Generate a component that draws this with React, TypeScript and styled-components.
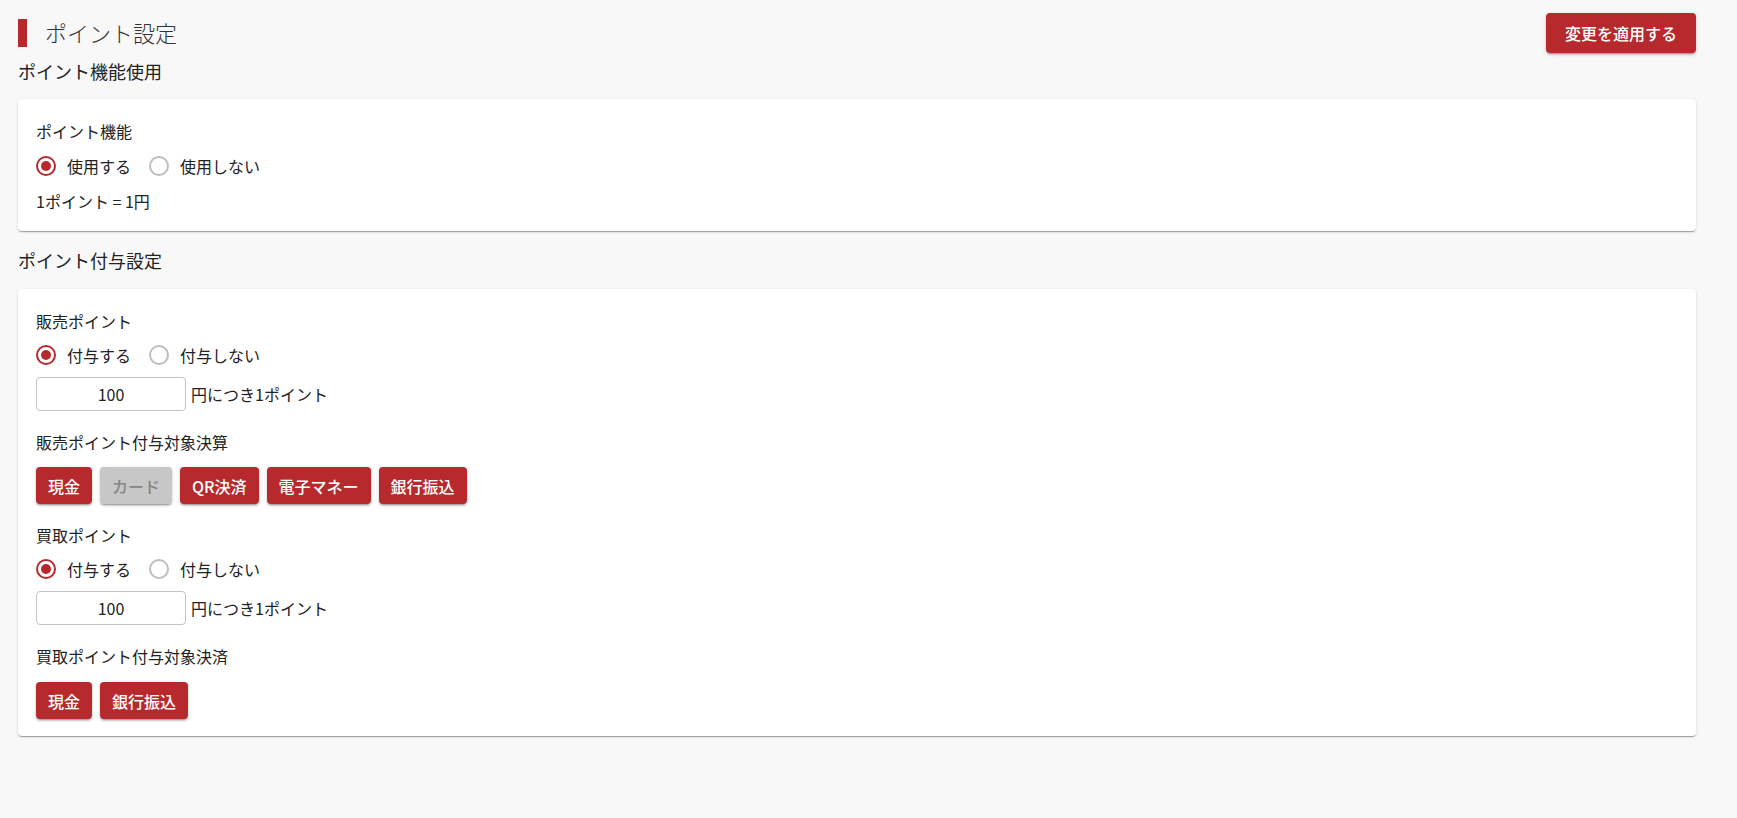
import React, { useState } from "react";
import styled, { createGlobalStyle } from "styled-components";

const red = "#b7292c";
const text = "#222";
const font = `"Noto Sans CJK JP", "Noto Sans", sans-serif`;

const GlobalStyle = createGlobalStyle`
    html, body {
        margin: 0;
        background: #f8f8f8;
        font-family: ${font};
        color: ${text};
    }
`

const Page = styled.div`
    padding: 13px 41px 40px 18px;
    min-height: 818px;
    box-sizing: border-box;
`

const Header = styled.div`
    display: flex;
    align-items: center;
    justify-content: space-between;
    height: 40px;
`

const TitleWrap = styled.div`
    display: flex;
    align-items: center;
    gap: 18px;
`

const TitleBar = styled.span`
    width: 9px;
    height: 28px;
    background: ${red};
`

const Title = styled.h1`
    margin: 0 0 2px;
    font-size: 22px;
    font-weight: 300;
    line-height: 28px;
    color: #333;
`

const ApplyButton = styled.button`
    height: 40px;
    width: 150px;
    border: none;
    border-radius: 4px;
    background: ${red};
    color: #fff;
    font-family: ${font};
    font-size: 16px;
    font-weight: 500;
    box-shadow: 0 3px 1px -2px rgba(0,0,0,.2), 0 2px 2px 0 rgba(0,0,0,.14), 0 1px 5px 0 rgba(0,0,0,.12);
    cursor: pointer;
`

const SectionTitle = styled.h2<{ $top: number; $bottom: number }>`
    margin: ${p => p.$top}px 0 ${p => p.$bottom}px;
    font-size: 18px;
    font-weight: 400;
    line-height: 24px;
`

const Card = styled.div<{ $pad: string; $gap: number }>`
    background: #fff;
    border-radius: 4px;
    padding: ${p => p.$pad};
    box-shadow: 0 2px 1px -1px rgba(0,0,0,.2), 0 1px 1px 0 rgba(0,0,0,.14), 0 1px 3px 0 rgba(0,0,0,.12);
    display: flex;
    flex-direction: column;
    gap: ${p => p.$gap}px;
`

const Block = styled.div<{ $gap: number }>`
    display: flex;
    flex-direction: column;
    gap: ${p => p.$gap}px;
`

const Label = styled.div`
    font-size: 16px;
    line-height: 24px;
`

const RadioRow = styled.div`
    display: flex;
    align-items: center;
    height: 24px;
    gap: 18px;
`

const RadioOption = styled.label`
    display: flex;
    align-items: center;
    gap: 11px;
    font-size: 16px;
    line-height: 24px;
    cursor: pointer;
`

const RadioCircle = styled.span<{ $on: boolean }>`
    width: 20px;
    height: 20px;
    box-sizing: border-box;
    border-radius: 50%;
    border: 2px solid ${p => (p.$on ? red : "#bdbdbd")};
    display: flex;
    align-items: center;
    justify-content: center;
    &::after {
        content: "";
        width: 10px;
        height: 10px;
        border-radius: 50%;
        background: ${red};
        display: ${p => (p.$on ? "block" : "none")};
    }
`

const RateRow = styled.div`
    display: flex;
    align-items: center;
    gap: 5px;
    font-size: 16px;
`

const NumberInput = styled.input`
    width: 150px;
    height: 34px;
    box-sizing: border-box;
    border: 1px solid #c4c4c4;
    border-radius: 4px;
    text-align: center;
    font-family: ${font};
    font-size: 16px;
    color: ${text};
    outline: none;
`

const ButtonRow = styled.div`
    display: flex;
    gap: 8px;
`

const PayButton = styled.button<{ $off?: boolean }>`
    height: 37px;
    padding: 0 12px;
    border: none;
    border-radius: 4px;
    background: ${p => (p.$off ? "#c7c7c7" : red)};
    color: ${p => (p.$off ? "#858585" : "#fff")};
    font-family: ${font};
    font-size: 16px;
    font-weight: 500;
    box-shadow: 0 3px 1px -2px rgba(0,0,0,.2), 0 2px 2px 0 rgba(0,0,0,.14), 0 1px 5px 0 rgba(0,0,0,.12);
    cursor: pointer;
`

const Radio = ({ options, value, onChange }: { options: string[]; value: number; onChange: (i: number) => void }) => (
    <RadioRow>
        {options.map((o, i) => (
            <RadioOption key={o} onClick={() => onChange(i)}>
                <RadioCircle $on={value === i} />
                {o}
            </RadioOption>
        ))}
    </RadioRow>
)

const salePays = ["現金", "カード", "QR決済", "電子マネー", "銀行振込"];
const buyPays = ["現金", "銀行振込"];

const App = () => {
    const [usePoint, setUsePoint] = useState(0);
    const [sale, setSale] = useState(0);
    const [buy, setBuy] = useState(0);
    const [saleRate, setSaleRate] = useState("100");
    const [buyRate, setBuyRate] = useState("100");

    return <>
        <GlobalStyle />
        <Page>
            <Header>
                <TitleWrap>
                    <TitleBar />
                    <Title>ポイント設定</Title>
                </TitleWrap>
                <ApplyButton>変更を適用する</ApplyButton>
            </Header>

            <SectionTitle $top={6} $bottom={16}>ポイント機能使用</SectionTitle>
            <Card $pad="20px 18px 18px" $gap={11}>
                <Label>ポイント機能</Label>
                <Radio options={["使用する", "使用しない"]} value={usePoint} onChange={setUsePoint} />
                <Label>1ポイント = 1円</Label>
            </Card>

            <SectionTitle $top={17} $bottom={17}>ポイント付与設定</SectionTitle>
            <Card $pad="20px 18px 17px" $gap={19}>
                <Block $gap={10}>
                    <Label>販売ポイント</Label>
                    <Radio options={["付与する", "付与しない"]} value={sale} onChange={setSale} />
                    <RateRow>
                        <NumberInput value={saleRate} onChange={e => setSaleRate(e.target.value)} />
                        円につき1ポイント
                    </RateRow>
                </Block>
                <Block $gap={13}>
                    <Label>販売ポイント付与対象決算</Label>
                    <ButtonRow>
                        {salePays.map(p => <PayButton key={p} $off={p === "カード"}>{p}</PayButton>)}
                    </ButtonRow>
                </Block>
                <Block $gap={10}>
                    <Label>買取ポイント</Label>
                    <Radio options={["付与する", "付与しない"]} value={buy} onChange={setBuy} />
                    <RateRow>
                        <NumberInput value={buyRate} onChange={e => setBuyRate(e.target.value)} />
                        円につき1ポイント
                    </RateRow>
                </Block>
                <Block $gap={14}>
                    <Label>買取ポイント付与対象決済</Label>
                    <ButtonRow>
                        {buyPays.map(p => <PayButton key={p}>{p}</PayButton>)}
                    </ButtonRow>
                </Block>
            </Card>
        </Page>
    </>
}

export default App;
